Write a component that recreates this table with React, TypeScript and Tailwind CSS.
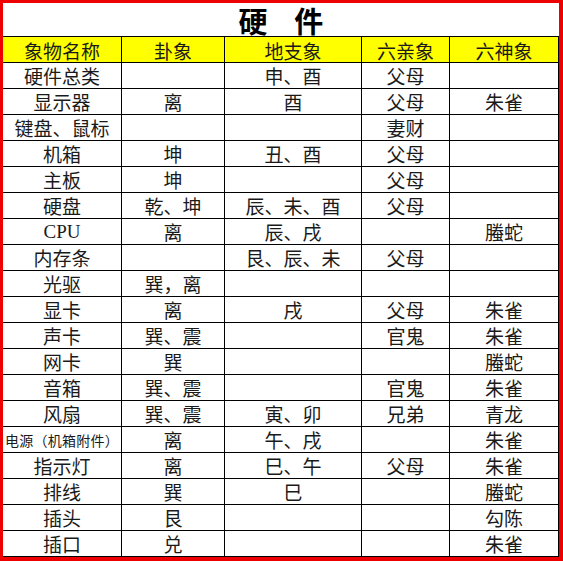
import React from "react";

const rows: string[][] = [
  ["硬件总类", "", "申、酉", "父母", ""],
  ["显示器", "离", "酉", "父母", "朱雀"],
  ["键盘、鼠标", "", "", "妻财", ""],
  ["机箱", "坤", "丑、酉", "父母", ""],
  ["主板", "坤", "", "父母", ""],
  ["硬盘", "乾、坤", "辰、未、酉", "父母", ""],
  ["CPU", "离", "辰、戌", "", "螣蛇"],
  ["内存条", "", "艮、辰、未", "父母", ""],
  ["光驱", "巽，离", "", "", ""],
  ["显卡", "离", "戌", "父母", "朱雀"],
  ["声卡", "巽、震", "", "官鬼", "朱雀"],
  ["网卡", "巽", "", "", "螣蛇"],
  ["音箱", "巽、震", "", "官鬼", "朱雀"],
  ["风扇", "巽、震", "寅、卯", "兄弟", "青龙"],
  ["电源（机箱附件）", "离", "午、戌", "", "朱雀"],
  ["指示灯", "离", "巳、午", "父母", "朱雀"],
  ["排线", "巽", "巳", "", "螣蛇"],
  ["插头", "艮", "", "", "勾陈"],
  ["插口", "兑", "", "", "朱雀"],
];

const headers = ["象物名称", "卦象", "地支象", "六亲象", "六神象"];

export default function App() {
  return (
    <div
      className="w-[563px] h-[561px] bg-white border-[#ee0000] border-t-[3px] border-l-[3px] border-r-[4px] border-b-[4px] flex flex-col text-[#1a1a1a]"
      style={{ fontFamily: '"Noto Sans CJK SC", "Noto Sans", sans-serif' }}
    >
      <div className="h-[34px] flex items-center justify-center">
        <span className="text-[29px] font-bold text-black leading-[30px] tracking-[0.35em] pl-[10px]">
          硬 件
        </span>
      </div>
      <div className="grid grid-cols-[119px_103px_137px_88px_109px] grid-rows-[27px_repeat(19,26px)]">
        {headers.map((h) => (
          <div
            key={h}
            className="bg-[#ffff00] border-t border-b border-r border-black flex items-center justify-center text-[19px] leading-none pt-[1px]"
          >
            {h}
          </div>
        ))}
        {rows.map((r, ri) =>
          r.map((c, ci) => (
            <div
              key={ri + "-" + ci}
              className={
                "border-b border-r border-black flex items-center justify-center leading-none whitespace-nowrap " +
                (c.length > 6 ? "text-[14px] tracking-[0.02em]" : "text-[19px]")
              }
              style={
                c === "CPU"
                  ? { fontFamily: '"Liberation Serif", serif', fontSize: "19px" }
                  : undefined
              }
            >
              {c}
            </div>
          ))
        )}
      </div>
    </div>
  );
}
